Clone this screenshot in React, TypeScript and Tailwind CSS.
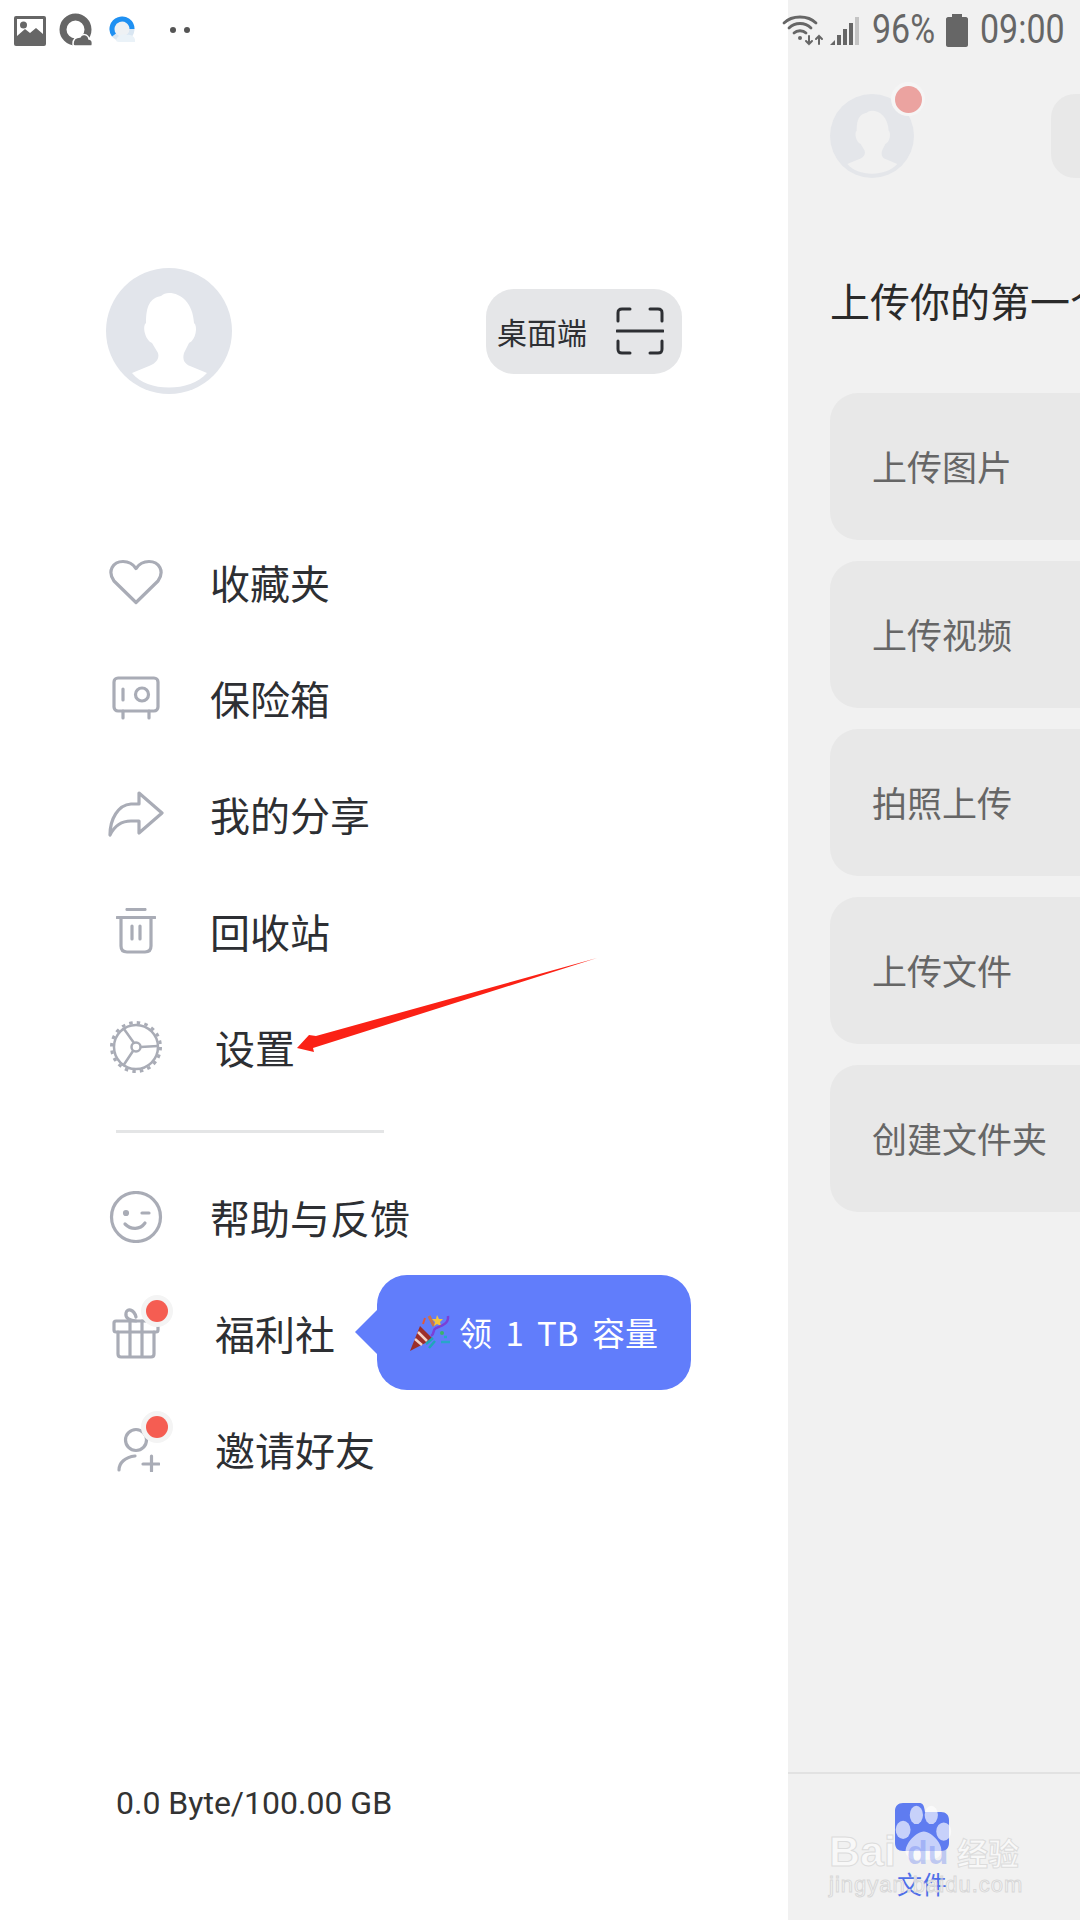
const cjk = "font-['Noto_Sans_CJK_SC','Noto_Sans',sans-serif]";

const Avatar = ({ size, bg, cut }: { size: number; bg: string; cut: string }) => (
  <svg width={size} height={size} viewBox="0 0 126 126" className="shrink-0">
    <circle cx="63" cy="63" r="63" fill={bg} />
    <path
      d="M63 25C75 25 87 35 88 55C92 58 90 72 83 75L78 85C76 92 79 96 84 98L101 105C92 115 78 119.5 63 119.5C48 119.5 34 115 26 105L43 98C49 96 54 91 52 85L46 75C39 72 36 58 40 55C40 38 44 30 55 28C57 26 60 25 63 25Z"
      fill={cut}
    />
  </svg>
);

const iconProps = {
  fill: "none",
  stroke: "#a9acb6",
  strokeWidth: 3.2,
  strokeLinecap: "round" as const,
  strokeLinejoin: "round" as const,
};

const HeartIcon = () => (
  <svg width="56" height="46" viewBox="0 0 56 46" {...iconProps}>
    <path d="M28 43.5L6 22C-1 12 5 2.5 15 2.5C21 2.5 25 5 28 9.5C31 5 35 2.5 41 2.5C51 2.5 57 12 50 22Z" />
  </svg>
);

const SafeIcon = () => (
  <svg width="48" height="44" viewBox="0 0 48 44" {...iconProps}>
    <rect x="2" y="2" width="44" height="33" rx="4" />
    <path d="M11 13V24M11 35V42M37 35V42" />
    <circle cx="30" cy="18.500" r="6.500" />
  </svg>
);

const ShareIcon = () => (
  <svg width="56" height="46" viewBox="0 0 56 46" {...iconProps}>
    <path d="M2 44C2 28 10 14 23 13H31V2L54 22L31 42V30H23C14 30 7 34 2 44Z" />
  </svg>
);

const TrashIcon = () => (
  <svg width="40" height="46" viewBox="0 0 40 46" {...iconProps}>
    <path d="M11 1.500H29M1 9.500H39M5 10V38C5 42 7 44 11 44H29C33 44 35 42 35 38V10M16 18V31M24 18V31" />
  </svg>
);

const GearIcon = () => (
  <svg width="52" height="52" viewBox="0 0 52 52" fill="none" stroke="#a9acb6">
    <circle cx="26" cy="26" r="22" strokeWidth="2.500" />
    <circle cx="26" cy="26" r="24.500" strokeWidth="3" strokeDasharray="3.500 4.200" />
    <circle cx="26" cy="26" r="4.500" strokeWidth="2.500" />
    <path d="M30.500 26L48 25M24 22L14 8M23 30L13 45" strokeWidth="2.500" />
  </svg>
);

const SmileIcon = () => (
  <svg width="54" height="52" viewBox="0 0 54 52" {...iconProps}>
    <circle cx="27" cy="26" r="24.500" />
    <path d="M16 36C22 42 31 42 36 35" transform="translate(0 -3)" />
    <path d="M33 22H40" />
    <circle cx="17" cy="22" r="1.500" fill="#a9acb6" />
  </svg>
);

const GiftIcon = () => (
  <svg width="48" height="52" viewBox="0 0 48 52" {...iconProps}>
    <rect x="2" y="14" width="44" height="11" rx="2" />
    <path d="M6 25V47C6 49 7 50 9 50H39C41 50 42 49 42 47V25M18 14V50M30 14V50" />
    <path d="M24 14C18 14 13 11 14 6C15 1 22 2 24 10" />
  </svg>
);

const InviteIcon = () => (
  <svg width="48" height="46" viewBox="0 0 48 46" {...iconProps}>
    <circle cx="24" cy="14" r="10.500" />
    <path d="M7 44C7 37 13 31 23 30M31 38H47M39.500 30V45" />
  </svg>
);

const ScanIcon = () => (
  <svg width="48" height="48" viewBox="0 0 48 48" fill="none" stroke="#2d2f33" strokeWidth="3" strokeLinecap="round">
    <path d="M14 2H6C3 2 2 3 2 6V14M34 2H42C45 2 46 3 46 6V14M14 46H6C3 46 2 45 2 42V34M34 46H42C45 46 46 45 46 42V34" />
    <path d="M1 24H47" />
  </svg>
);

const Dot = () => (
  <span className="absolute left-[141px] top-[20px] w-[32px] h-[32px] rounded-full bg-[#f4f4f4] flex items-center justify-center">
    <span className="w-[22px] h-[22px] rounded-full bg-[#f55d52]" />
  </span>
);

const PartyPopper = () => (
  <svg width="42" height="38" viewBox="0 0 42 38" className="shrink-0">
    <path d="M1 37L11 12L24 25Z" fill="#9c2f2a" />
    <path d="M6 25L13 31M9 18L18 27" stroke="#f4d3c6" strokeWidth="2.500" />
    <path d="M20 2L25 12" stroke="#c9744a" strokeWidth="3" />
    <path d="M28 1L30 5L34 5L31 8L32 12L28 10L25 12L26 8L23 5L27 5Z" fill="#f5c63b" />
    <path d="M39 2C40 10 32 12 27 14C23 16 26 20 22 22" fill="none" stroke="#7b3fd6" strokeWidth="2.500" />
    <path d="M14 10L16 4" stroke="#e05a3c" strokeWidth="2" />
    <path d="M24 24L17 30M26 27L20 34" stroke="#1fa7b8" strokeWidth="2.500" />
    <path d="M32 28H41M35 23H38" stroke="#28a6c9" strokeWidth="2.500" />
    <circle cx="33" cy="19" r="2" fill="#3bb36b" />
  </svg>
);

const menuTop = [
  { label: "收藏夹", icon: <HeartIcon /> },
  { label: "保险箱", icon: <SafeIcon /> },
  { label: "我的分享", icon: <ShareIcon /> },
  { label: "回收站", icon: <TrashIcon /> },
  { label: "设置", icon: <GearIcon />, indent: true },
];

const MenuRow = ({
  label,
  icon,
  indent,
  dot,
  children,
}: {
  label: string;
  icon: React.ReactNode;
  indent?: boolean;
  dot?: boolean;
  children?: React.ReactNode;
}) => (
  <div className="relative h-[116.200px] pl-[108px] flex items-center">
    <div className="w-[56px] flex justify-center">{icon}</div>
    {dot && <Dot />}
    <span className={`${indent ? "ml-[51px]" : "ml-[46px]"} text-[40px] leading-[56px] text-[#2d2f33] whitespace-nowrap`}>
      {label}
    </span>
    {children}
  </div>
);

const uploads = ["上传图片", "上传视频", "拍照上传", "上传文件", "创建文件夹"];

export default function App() {
  return (
    <div className={`relative w-[1080px] h-[1920px] flex overflow-hidden bg-white ${cjk}`}>
      <aside className="w-[788px] shrink-0 bg-white flex flex-col">
        <div className="h-[60px] pl-[14px] flex items-center">
          <svg width="32" height="30" viewBox="0 0 32 30" className="mt-[2px]">
            <rect width="32" height="30" rx="2" fill="#666" />
            <rect x="3" y="3" width="26" height="24" fill="#fff" />
            <circle cx="9.500" cy="9" r="3.500" fill="#666" />
            <path d="M3 27V20L11 13L16 17L22 12L29 18V27Z" fill="#666" />
          </svg>
          <svg width="34" height="34" viewBox="0 0 34 34" className="ml-[13px]">
            <circle cx="16.500" cy="16.500" r="12.500" fill="none" stroke="#666" strokeWidth="7" />
            <path d="M14 31C14 26 17 24 21 24C23 20 29 21 30 26C33 26 34 29 33 33H16C14 33 14 32 14 31Z" fill="#666" stroke="#fff" strokeWidth="1.500" />
          </svg>
          <svg width="28" height="28" viewBox="0 0 28 28" className="ml-[16px]">
            <circle cx="13" cy="13" r="10" fill="#eef1f4" stroke="#d9e6f2" strokeWidth="5" />
            <path d="M23 13A10 10 0 1 0 5 19" fill="none" stroke="#1f90f2" strokeWidth="5" />
            <path d="M7 24C9 19 14 17 18 19C22 18 27 21 26 26H10C8 26 7 25 7 24Z" fill="#eaf2f8" />
          </svg>
          <span className="ml-[33px] w-[6px] h-[6px] rounded-full bg-[#555]" />
          <span className="ml-[8px] w-[6px] h-[6px] rounded-full bg-[#555]" />
        </div>

        <div className="mt-[208px] pl-[106px] pr-[106px] flex items-center justify-between">
          <Avatar size={126} bg="#e2e5eb" cut="#ffffff" />
          <div className="w-[196px] h-[85px] rounded-[28px] bg-[#e5e6e8] pl-[11px] pr-[18px] flex items-center justify-between">
            <span className="text-[30px] text-[#2d2f33]">桌面端</span>
            <ScanIcon />
          </div>
        </div>

        <nav className="mt-[130px]">
          {menuTop.map((item) => (
            <MenuRow key={item.label} {...item} />
          ))}
          <div className="ml-[116px] mt-[25px] mb-[26px] w-[268px] h-[3px] bg-[#e4e5e6]" />
          <MenuRow label="帮助与反馈" icon={<SmileIcon />} />
          <MenuRow label="福利社" icon={<GiftIcon />} indent dot>
            <div className="absolute left-[377px] top-[0px] w-[314px] h-[115px] rounded-[30px] bg-[#617dfb] flex items-center pl-[32px] gap-[8px]">
              <span className="absolute left-[-22px] top-[35px] w-0 h-0 border-y-[22px] border-y-transparent border-r-[22px] border-r-[#617dfb]" />
              <PartyPopper />
              <span className="text-[33px] text-white whitespace-nowrap [word-spacing:6px]">领 1 TB 容量</span>
            </div>
          </MenuRow>
          <MenuRow label="邀请好友" icon={<InviteIcon />} indent dot />
        </nav>

        <div className="mt-auto pb-[97px] pl-[116px] text-[32px] leading-[40px] text-[#333] font-['Roboto',sans-serif]">
          0.0 Byte/100.00 GB
        </div>
      </aside>

      <main className="relative flex-1 min-w-0 bg-[#f1f1f1] flex flex-col">
        <div className="h-[60px] -ml-[6px] flex items-center whitespace-nowrap text-[#666] font-['Roboto',sans-serif]">
          <svg width="44" height="32" viewBox="0 0 44 32" fill="none" stroke="#666" strokeWidth="2.800" strokeLinecap="round">
            <path d="M2 9C10 1 26 1 34 9M7 14C13 8 23 8 29 14M12 19C15 16 21 16 24 19" />
            <circle cx="18" cy="24" r="2" fill="#666" stroke="none" />
            <path d="M27 22V30M24 27L27 30L30 27M37 30V22M34 25L37 22L40 25" strokeWidth="2" />
          </svg>
          <svg width="32" height="32" viewBox="0 0 32 32" className="ml-[2px]">
            <path d="M2 31L7 26V31Z" fill="#666" />
            <rect x="9" y="21" width="4" height="10" fill="#666" />
            <rect x="15" y="15" width="4" height="16" fill="#666" />
            <rect x="21" y="9" width="4" height="22" fill="#666" />
            <rect x="27" y="3" width="4" height="28" fill="#c4c4c4" />
          </svg>
          <span className="ml-[12px] w-[72px] text-[40px] leading-[60px] inline-block origin-left scale-x-[0.85]">96%</span>
          <svg width="22" height="33" viewBox="0 0 22 33" className="ml-[2px]">
            <path d="M6 0H16V3H20C21 3 22 4 22 5V31C22 32 21 33 20 33H2C1 33 0 32 0 31V5C0 4 1 3 2 3H6Z" fill="#666" />
          </svg>
          <span className="ml-[12px] text-[40px] leading-[60px] inline-block origin-left scale-x-[0.85]">09:00</span>
        </div>

        <div className="relative mt-[34px] pl-[42px] h-[84px] flex items-center">
          <Avatar size={84} bg="#e4e6ea" cut="#f1f1f1" />
          <span className="absolute left-[103px] top-[-12px] w-[34px] h-[34px] rounded-full bg-[#f5f5f5] flex items-center justify-center">
            <span className="w-[27px] h-[27px] rounded-full bg-[#eba3a0]" />
          </span>
          <div className="ml-[137px] w-[200px] h-[84px] shrink-0 rounded-[24px] bg-[#e8e8e8]" />
        </div>

        <h2 className="mt-[92px] pl-[42px] text-[40px] leading-[60px] font-normal text-[#2a2a2a] whitespace-nowrap overflow-hidden">
          上传你的第一个文件
        </h2>

        <div className="mt-[63px] pl-[42px] flex flex-col gap-[21px] overflow-hidden">
          {uploads.map((text) => (
            <div key={text} className="w-[400px] h-[147px] shrink-0 rounded-[28px] bg-[#e8e8e8] pl-[42px] flex items-center text-[35px] text-[#666]">
              {text}
            </div>
          ))}
        </div>

        <div className="mt-auto h-[148px] border-t-2 border-[#e2e2e2] pr-[24px] flex flex-col items-center">
          <svg width="54" height="48" viewBox="0 0 54 48" className="mt-[29px]">
            <path d="M0 8C0 3 3 0 8 0H24C28 0 29 2 30 9H46C51 9 54 12 54 17V40C54 45 51 48 46 48H8C3 48 0 45 0 40Z" fill="#5f7cf0" />
          </svg>
          <span className="mt-[15px] text-[25px] leading-[34px] text-[#4f6fe8]">文件</span>
        </div>
      </main>

      {/* red annotation arrow drawn over the screenshot */}
      <svg width="320" height="110" viewBox="0 0 320 110" className="absolute left-[290px] top-[950px] pointer-events-none">
        <path d="M307 8L26 86L19 85L7 98L24 102L23 98Z" fill="#fb2115" />
      </svg>

      {/* watermark */}
      <div className="absolute left-[829px] top-[1800px] w-[200px] h-[100px] pointer-events-none">
        <span className="absolute left-0 top-[26px] text-[43px] leading-[50px] font-bold text-[#f9f9f9]/90 font-['Liberation_Sans',sans-serif] [-webkit-text-stroke:1px_#dcdcdc]">
          Bai
        </span>
        <svg width="58" height="60" viewBox="0 0 70 70" className="absolute left-[65px] top-[4px]">
          <g fill="#ffffff" fillOpacity="0.65">
            <ellipse cx="11" cy="30" rx="9" ry="11" />
            <ellipse cx="27" cy="12" rx="8" ry="11" />
            <ellipse cx="45" cy="12" rx="8" ry="11" />
            <ellipse cx="60" cy="32" rx="9" ry="11" />
            <path d="M36 32C46 32 62 50 56 60C50 68 40 66 35 66C30 66 20 68 15 60C10 50 26 32 36 32Z" />
          </g>
        </svg>
        <span className="absolute left-[78px] top-[30px] text-[34px] leading-[44px] font-bold text-[#5f7cf0]/35 font-['Liberation_Sans',sans-serif]">
          du
        </span>
        <span className="absolute left-[128px] top-[30px] text-[31px] leading-[44px] font-bold text-[#f9f9f9]/90 [-webkit-text-stroke:1px_#dcdcdc]">
          经验
        </span>
        <span className="absolute left-0 top-[70px] text-[22px] leading-[30px] tracking-[1px] text-[#f9f9f9]/80 font-['Liberation_Sans',sans-serif] [-webkit-text-stroke:1px_#d8d8d8]">
          jingyan.baidu.com
        </span>
      </div>
    </div>
  );
}
